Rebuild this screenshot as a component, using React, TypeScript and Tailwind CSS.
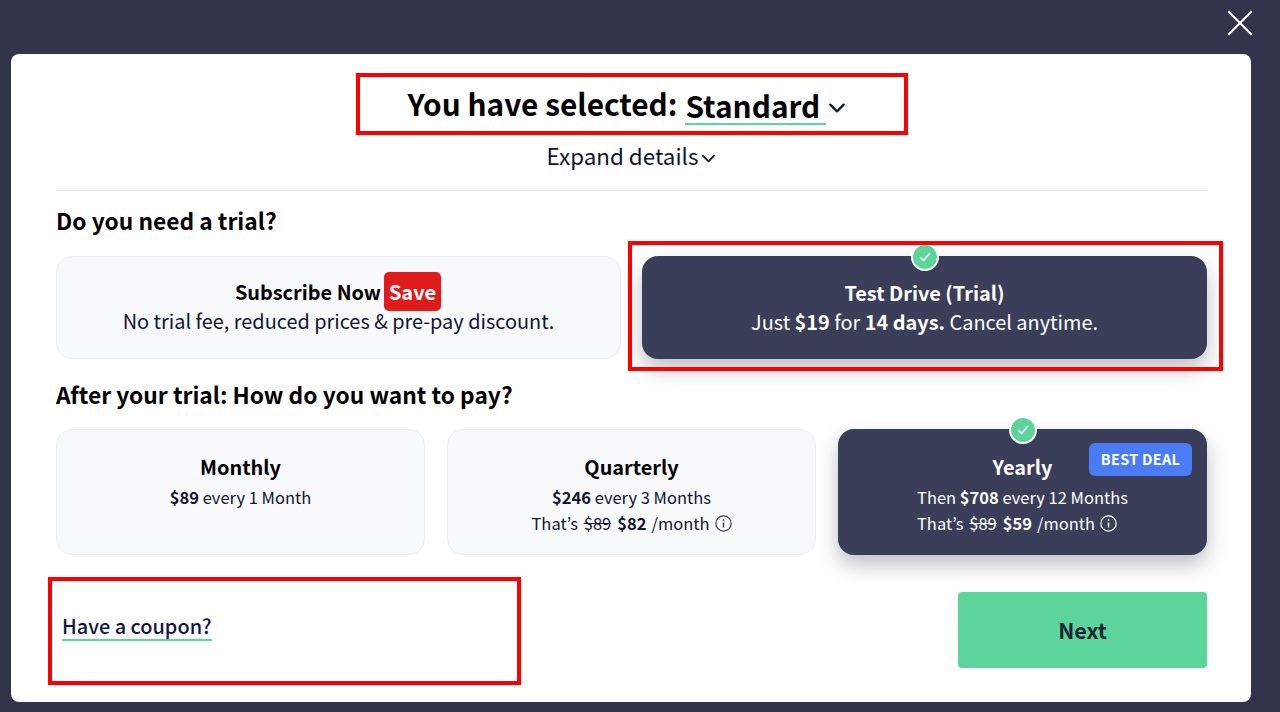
import React from "react";

const font = { fontFamily: '"Noto Sans CJK JP", "Noto Sans", sans-serif' };

function Check({ className }: { className: string }) {
  return (
    <span className={`absolute left-1/2 -translate-x-1/2 w-[28px] h-[28px] rounded-full bg-[#5dd49c] border-[2px] border-white flex items-center justify-center ${className}`}>
      <svg width="14" height="14" viewBox="0 0 14 14" fill="none" stroke="white" strokeWidth="1.5" strokeLinecap="round" strokeLinejoin="round">
        <path d="M2.5 7.5 L5.5 10.5 L11.5 3.5" />
      </svg>
    </span>
  );
}

function Chevron({ size, width }: { size: number; width: number }) {
  return (
    <svg width={size} height={size} viewBox="0 0 16 16" fill="none" stroke="#11142d" strokeWidth={width} strokeLinecap="round" strokeLinejoin="round">
      <path d="M2 5 L8 11 L14 5" />
    </svg>
  );
}

function Info({ color }: { color: string }) {
  return (
    <svg width="17" height="17" viewBox="0 0 17 17" fill="none" stroke={color} strokeWidth="1.2" className="ml-[5px] mt-[1px]">
      <circle cx="8.5" cy="8.5" r="7.7" />
      <path d="M8.5 7.5 V12.5" strokeWidth="1.5" />
      <path d="M8.5 4.2 V5.8" strokeWidth="1.6" />
    </svg>
  );
}

function PlanPrice({ lead, total, period, old, now, dark }: { lead?: string; total: string; period: string; old?: string; now?: string; dark?: boolean }) {
  return (
    <div className="text-[16.5px] leading-[26px] mt-[1px]">
      <div>
        {lead ? `${lead} ` : ""}<b className="font-bold">{total}</b> {period}
      </div>
      {old && (
        <div className={`flex items-center justify-center ${dark ? "pr-[11px]" : ""}`}>
          <span className="mr-[2px]">That’s&nbsp;</span>
          <s>{old}</s>
          <b className="font-bold ml-[6px]">{now}</b>
          <span className="ml-[5px]">/month</span>
          <Info color={dark ? "#ffffff" : "#3b3e59"} />
        </div>
      )}
    </div>
  );
}

export default function App() {
  return (
    <div style={font} className="relative w-[1280px] h-[712px] overflow-hidden bg-[#32344b] pt-[54px] pl-[11px]">
      <svg width="26" height="26" viewBox="0 0 26 26" stroke="white" strokeWidth="2" strokeLinecap="square" className="absolute left-[1227px] top-[10px]">
        <path d="M2 2 L24 24 M24 2 L2 24" />
      </svg>

      <div className="w-[1240px] h-[648px] bg-white rounded-[8px] pl-[45px] pr-[44px] text-[#11142d]">
        <div className="flex items-center justify-center h-[98px] pr-[9px] text-black">
          <span className="text-[29.8px] leading-[40px] font-bold">You have selected:</span>
          <span className="ml-[8px] text-[29.8px] leading-[36px] font-bold border-b-[2px] border-[#5dd49c] w-[141px] mt-[5px]">Standard</span>
          <span className="ml-[2px] mt-[10px]"><Chevron size={18} width={1.9} /></span>
        </div>
        <div className="flex items-center justify-center h-[32px] -mt-[13px] text-[22.4px] leading-[32px]">
          <span>Expand details</span>
          <span className="ml-[3px] mt-[6px]"><Chevron size={15} width={1.9} /></span>
        </div>
        <div className="mt-[19px] border-t border-[#e8e9ec]" />

        <h2 className="mt-[13px] text-[22.75px] leading-[34px] font-bold text-black">Do you need a trial?</h2>
        <div className="mt-[18px] grid grid-cols-[565px_565px] gap-x-[21px]">
          <div className="h-[103px] rounded-[16px] bg-[#f8f9fb] border border-[#eceef0] flex flex-col items-center pt-[15px] text-center">
            <div className="flex items-center h-[39px] pr-[1px] text-[19.9px] leading-[39px] font-bold text-black">
              Subscribe Now
              <span className="ml-[3px] h-[39px] w-[57px] text-center bg-[#e01b1b] rounded-[5px] text-white font-semibold text-[20px] leading-[39px]">Save</span>
            </div>
            <div className="text-[19.9px] leading-[28px] -mt-[4px]">No trial fee, reduced prices &amp; pre-pay discount.</div>
          </div>
          <div className="relative h-[103px] rounded-[16px] bg-[#3b3e59] shadow-[0_10px_20px_rgba(30,32,50,0.28)] text-white flex flex-col items-center justify-center pb-[2px] text-center">
            <Check className="-top-[13px]" />
            <div className="text-[19.9px] leading-[29px] font-bold">Test Drive (Trial)</div>
            <div className="text-[19.9px] leading-[29px]">
              Just <b className="font-bold">$19</b> for <b className="font-bold">14 days.</b> Cancel anytime.
            </div>
          </div>
        </div>

        <h2 className="mt-[19px] text-[22.75px] leading-[34px] font-bold text-black">After your trial: How do you want to pay?</h2>
        <div className="mt-[17px] grid grid-cols-[369px_369px_369px] gap-x-[22px]">
          <div className="h-[126px] rounded-[16px] bg-[#f8f9fb] border border-[#eceef0] text-center pt-[21px]">
            <div className="text-[19.9px] leading-[32px] font-bold text-black">Monthly</div>
            <PlanPrice total="$89" period="every 1 Month" />
          </div>
          <div className="h-[126px] rounded-[16px] bg-[#f8f9fb] border border-[#eceef0] text-center pt-[21px]">
            <div className="text-[19.9px] leading-[32px] font-bold text-black">Quarterly</div>
            <PlanPrice total="$246" period="every 3 Months" old="$89" now="$82" />
          </div>
          <div className="relative h-[126px] rounded-[16px] bg-[#3b3e59] shadow-[0_10px_20px_rgba(30,32,50,0.28)] text-white text-center pt-[22px]">
            <Check className="-top-[13px]" />
            <span className="absolute top-[14px] right-[15px] w-[103px] h-[33px] rounded-[6px] bg-[#4a7cf6] text-[14.5px] leading-[31px] font-bold tracking-[0.3px]">BEST DEAL</span>
            <div className="text-[19.9px] leading-[32px] font-bold">Yearly</div>
            <PlanPrice lead="Then" total="$708" period="every 12 Months" old="$89" now="$59" dark />
          </div>
        </div>

        <div className="mt-[37px] flex items-start justify-between">
          <span className="ml-[6px] mt-[20px] text-[19.9px] leading-[27px] font-medium text-[#11144a] border-b-[2px] border-[#5dd49c]">Have a coupon?</span>
          <button className="w-[249px] h-[76px] rounded-[4px] bg-[#5dd49c] text-[21.5px] font-semibold text-[#1d2533]">Next</button>
        </div>
      </div>

      <div className="absolute left-[356px] top-[73px] w-[552px] h-[62px] border-[4px] border-[#ff0000]" />
      <div className="absolute left-[628px] top-[241px] w-[595px] h-[130px] border-[4px] border-[#ff0000]" />
      <div className="absolute left-[48px] top-[577px] w-[473px] h-[108px] border-[4px] border-[#ff0000]" />
    </div>
  );
}
